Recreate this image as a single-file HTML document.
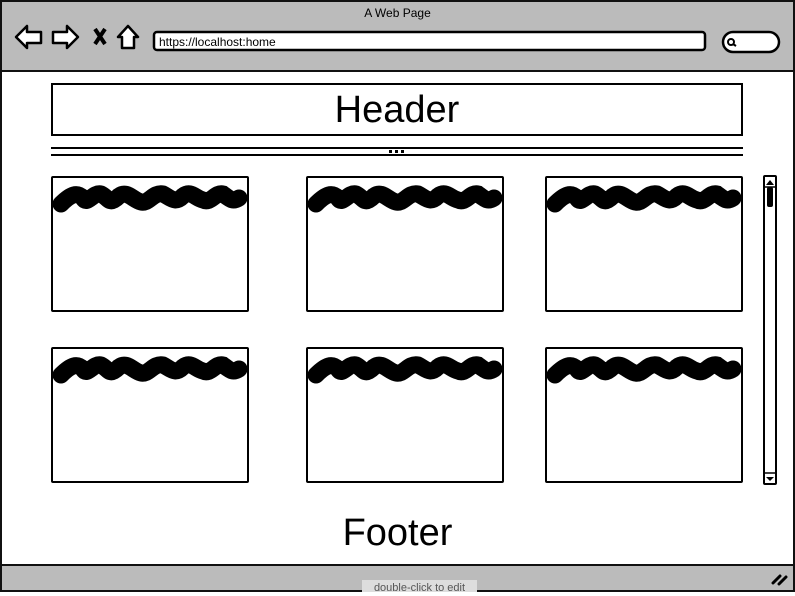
<!DOCTYPE html>
<html><head><style>
*{margin:0;padding:0;box-sizing:border-box}
body{width:795px;height:592px;overflow:hidden;background:#fff;font-family:"Liberation Sans",sans-serif;position:relative}
.a{position:absolute}
.card{position:absolute;width:198px;height:136px;border:2px solid #000;border-radius:2px;background:#fff;overflow:hidden}
</style></head><body>
<div class="a" style="left:0;top:0;width:795px;height:592px;border:2px solid #111"></div>
<div class="a" style="left:2px;top:2px;width:791px;height:70px;background:#bbb;border-bottom:2px solid #111"></div>
<div class="a" style="left:0;top:6px;width:795px;text-align:center;font-size:12px">A Web Page</div>
<svg class="a" style="left:0;top:0" width="795" height="72">
<g fill="#fff" stroke="#000" stroke-width="2.5" stroke-linejoin="round">
<path d="M16 37 L27 26 L27 32 L41 32 L41 43 L27 43 L27 48 Z"/>
<path d="M78 37 L67 26 L67 32 L53 32 L53 43 L67 43 L67 48 Z"/>
<path d="M118 37 L128 26 L138 37 L134 37 L134 48 L122 48 L122 37 Z"/>
</g>
<path d="M95 29 L105 44 M105 29 L95 44" stroke="#000" stroke-width="4"/>
<rect x="154" y="32" width="551" height="18" rx="3" fill="#fff" stroke="#000" stroke-width="2.5"/>
<rect x="723" y="32" width="56" height="20" rx="10" fill="#fff" stroke="#000" stroke-width="2.5"/>
<circle cx="731" cy="42" r="3" fill="none" stroke="#000" stroke-width="2"/><path d="M733 44 L736 46" stroke="#000" stroke-width="2"/>
</svg>
<div class="a" style="left:159px;top:35px;font-size:12px">https://localhost:home</div>
<div class="a" style="left:51px;top:83px;width:692px;height:53px;border:2px solid #000;text-align:center;font-size:38px;line-height:50px">Header</div>
<div class="a" style="left:51px;top:147px;width:692px;border-top:2px solid #000"></div>
<div class="a" style="left:51px;top:154px;width:692px;border-top:2px solid #000"></div>
<div class="a" style="left:389px;top:150px;width:16px;height:3px;background:repeating-linear-gradient(90deg,#000 0 3px,transparent 3px 6px)"></div>
<svg width="0" height="0" style="position:absolute"><defs><path id="s" d="M8 26 C18 16 24 14 30 20 C34 28 40 14 48 16 C56 20 56 28 66 18 C74 12 80 22 88 24 C96 26 100 14 110 16 C118 20 122 26 130 18 C138 12 142 20 150 22 C158 26 162 14 170 16 C178 22 180 24 186 20"/></defs></svg>
<div class="card" style="left:51px;top:176px"><svg width="198" height="50"><use href="#s" fill="none" stroke="#000" stroke-width="17" stroke-linecap="round"/></svg></div>
<div class="card" style="left:306px;top:176px"><svg width="198" height="50"><use href="#s" fill="none" stroke="#000" stroke-width="17" stroke-linecap="round"/></svg></div>
<div class="card" style="left:545px;top:176px"><svg width="198" height="50"><use href="#s" fill="none" stroke="#000" stroke-width="17" stroke-linecap="round"/></svg></div>
<div class="card" style="left:51px;top:347px"><svg width="198" height="50"><use href="#s" fill="none" stroke="#000" stroke-width="17" stroke-linecap="round"/></svg></div>
<div class="card" style="left:306px;top:347px"><svg width="198" height="50"><use href="#s" fill="none" stroke="#000" stroke-width="17" stroke-linecap="round"/></svg></div>
<div class="card" style="left:545px;top:347px"><svg width="198" height="50"><use href="#s" fill="none" stroke="#000" stroke-width="17" stroke-linecap="round"/></svg></div>
<div class="a" style="left:763px;top:175px;width:14px;height:310px;border:2px solid #000;border-radius:2px"></div>
<svg class="a" style="left:763px;top:175px" width="14" height="310">
<path d="M3 10 L7 5 L11 10 Z" fill="#000"/><rect x="4" y="12" width="6" height="20" rx="2" fill="#000"/>
<path d="M3 302 L7 306 L11 302 Z" fill="#000"/><path d="M2 298 H12 M2 12 H12" stroke="#000" stroke-width="1.5"/>
</svg>
<div class="a" style="left:0;top:512px;width:795px;text-align:center;font-size:38px">Footer</div>
<div class="a" style="left:2px;top:564px;width:791px;height:26px;background:#bbb;border-top:2px solid #111"></div>
<svg class="a" style="left:770px;top:572px" width="20" height="14"><path d="M3 11 L10 4 M9 12 L16 5" stroke="#000" stroke-width="3" stroke-linecap="round"/></svg>
<div class="a" style="left:362px;top:580px;width:115px;height:12px;background:#ddd;font-size:11px;color:#555;text-align:center;line-height:16px">double-click to edit</div>
</body></html>
